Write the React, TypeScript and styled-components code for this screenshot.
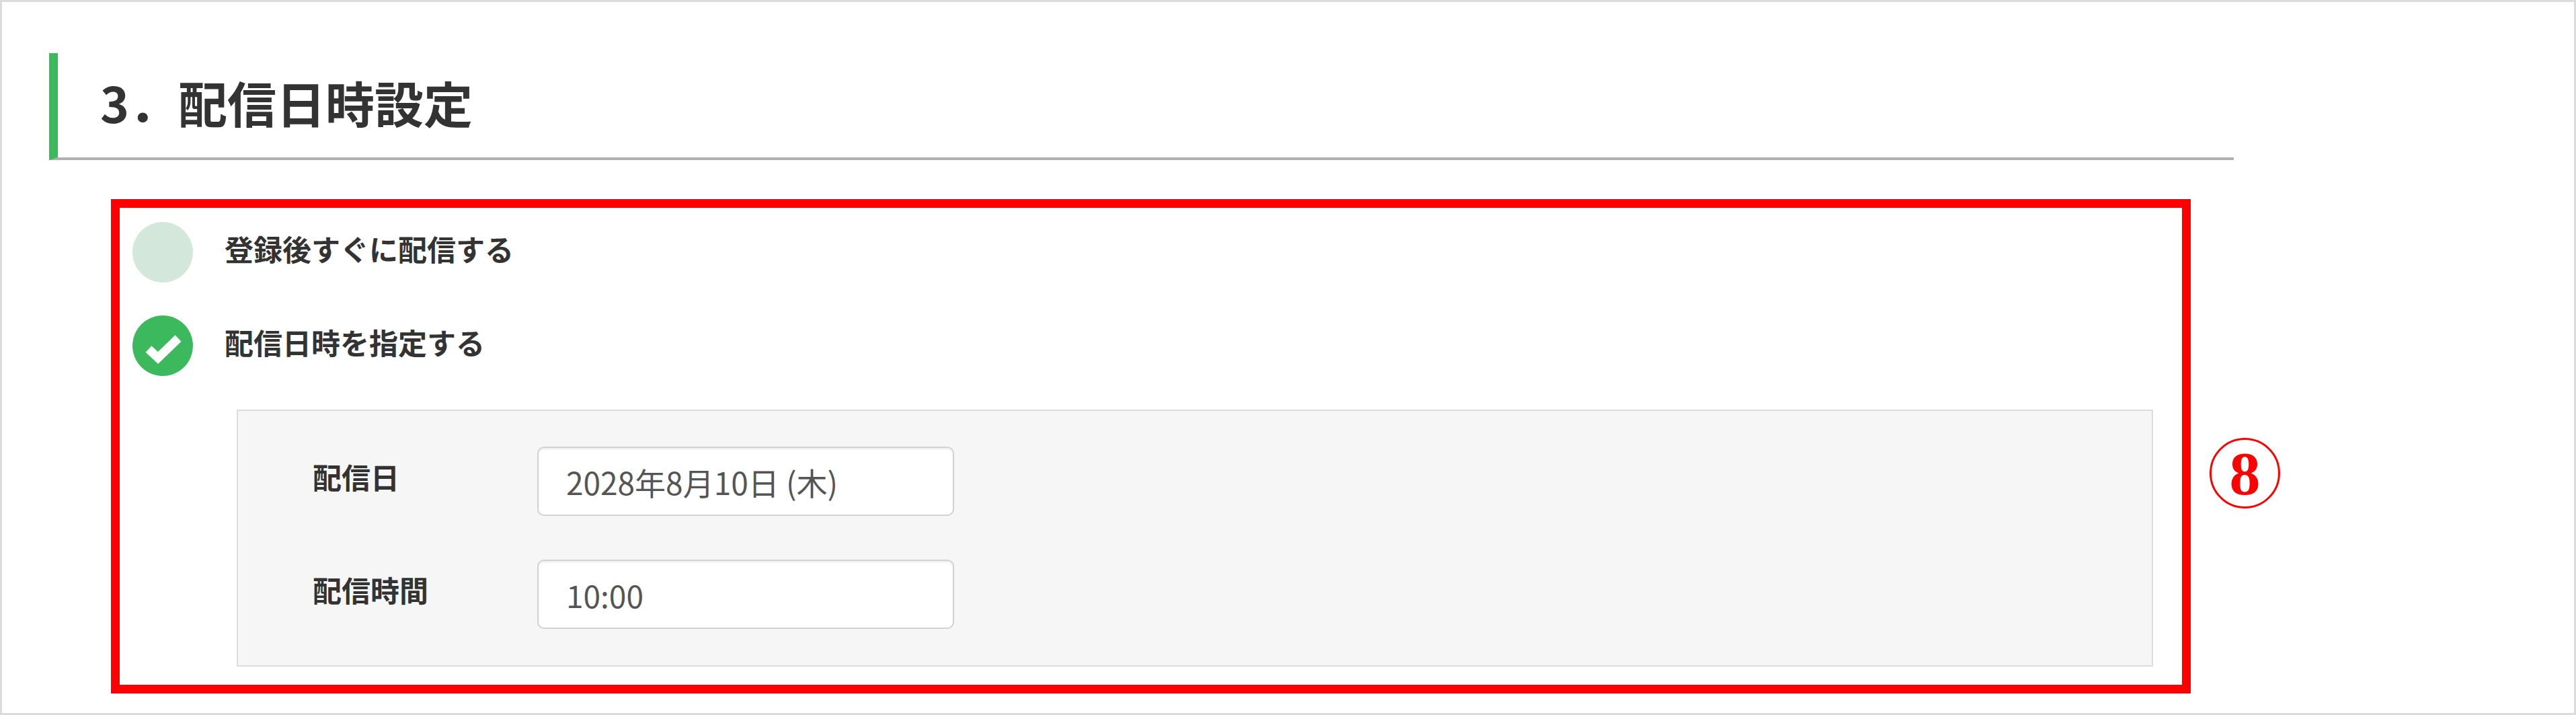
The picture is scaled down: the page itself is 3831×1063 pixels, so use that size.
import React from "react";
import styled, { createGlobalStyle } from "styled-components";

const GlobalStyle = createGlobalStyle`
  body {
    margin: 0;
    background: #fff;
    font-family: "Noto Sans CJK JP", "Noto Sans", sans-serif;
  }
`;

const fields = [
  { label: "配信日", value: "2028年8月10日 (木)" },
  { label: "配信時間", value: "10:00" },
];

const options = [
  { label: "登録後すぐに配信する", checked: false },
  { label: "配信日時を指定する", checked: true },
];

const CheckIcon = () => (
  <svg width="90" height="90" viewBox="0 0 90 90">
    <path
      d="M24 50 L38 63 L68 34"
      fill="none"
      stroke="#fff"
      strokeWidth="13"
      strokeLinejoin="miter"
    />
  </svg>
);

const App = () => {
  return (
    <>
      <GlobalStyle />
      <StyledFrame>
        <StyledHeading>3．配信日時設定</StyledHeading>
        <StyledBody>
          <StyledRedBox>
            <StyledRadioList>
              {options.map((o) => (
                <StyledRadioRow key={o.label}>
                  <StyledRadioMark $checked={o.checked}>
                    {o.checked && <CheckIcon />}
                  </StyledRadioMark>
                  <StyledRadioLabel>{o.label}</StyledRadioLabel>
                </StyledRadioRow>
              ))}
            </StyledRadioList>
            <StyledPanel>
              {fields.map((f) => (
                <React.Fragment key={f.label}>
                  <StyledFieldLabel>{f.label}</StyledFieldLabel>
                  <StyledInput readOnly value={f.value} />
                </React.Fragment>
              ))}
            </StyledPanel>
          </StyledRedBox>
          <StyledMarker>8</StyledMarker>
        </StyledBody>
      </StyledFrame>
    </>
  );
};

const StyledFrame = styled.div`
  box-sizing: border-box;
  width: 3831px;
  height: 1063px;
  border: 3px solid #dcdcdc;
  padding: 76px 0 0 70px;
  background: #fff;
`;

const StyledHeading = styled.h2`
  box-sizing: border-box;
  width: 3249px;
  height: 159px;
  margin: 0;
  display: flex;
  align-items: center;
  padding: 0 0 10px 63px;
  border-left: 13px solid #3cb95d;
  border-bottom: 4px solid #b1b1b1;
  font-size: 73px;
  font-weight: 700;
  line-height: 1;
  color: #333;
`;

const StyledBody = styled.div`
  display: flex;
  align-items: flex-start;
  margin-top: 58px;
  padding-left: 92px;
`;

const StyledRedBox = styled.div`
  box-sizing: border-box;
  width: 3093px;
  height: 735px;
  border: 13px solid #ff0000;
  padding: 21px 43px 26px 19px;
  display: flex;
  flex-direction: column;
`;

const StyledRadioList = styled.div`
  display: flex;
  flex-direction: column;
  gap: 49px;
`;

const StyledRadioRow = styled.div`
  display: flex;
  align-items: center;
  gap: 47px;
`;

const StyledRadioMark = styled.span<{ $checked: boolean }>`
  width: 90px;
  height: 90px;
  border-radius: 50%;
  flex-shrink: 0;
  display: flex;
  align-items: center;
  justify-content: center;
  background: ${(p) => (p.$checked ? "#3cb95d" : "#d3e8db")};
`;

const StyledRadioLabel = styled.span`
  font-size: 43px;
  font-weight: 700;
  line-height: 1;
  color: #333;
  padding-bottom: 12px;
`;

const StyledPanel = styled.div`
  box-sizing: border-box;
  margin: 50px 0 0 155px;
  height: 382px;
  border: 2px solid #dcdcdc;
  background: #f6f6f6;
  padding: 53px 0 0 111px;
  display: grid;
  grid-template-columns: 334px 620px;
  grid-auto-rows: 103px;
  row-gap: 65px;
  align-items: center;
`;

const StyledFieldLabel = styled.span`
  font-size: 43px;
  font-weight: 700;
  line-height: 1;
  color: #333;
  padding-bottom: 14px;
`;

const StyledInput = styled.input`
  box-sizing: border-box;
  width: 620px;
  height: 103px;
  margin: 0;
  border: 2px solid #d2d2d2;
  border-radius: 10px;
  background: #fff;
  box-shadow: inset 0 2px 3px rgba(0, 0, 0, 0.08);
  padding: 0 0 0 41px;
  font-family: "Noto Sans CJK JP", "Noto Sans", sans-serif;
  font-size: 46px;
  color: #555;
  outline: none;
`;

const StyledMarker = styled.span`
  box-sizing: border-box;
  flex-shrink: 0;
  width: 105px;
  height: 105px;
  margin: 355px 0 0 28px;
  border: 3px solid #ff0000;
  border-radius: 50%;
  display: flex;
  align-items: center;
  justify-content: center;
  font-family: "Liberation Serif", serif;
  font-weight: 700;
  font-size: 92px;
  line-height: 1;
  color: #ff0000;
`;

export default App;
